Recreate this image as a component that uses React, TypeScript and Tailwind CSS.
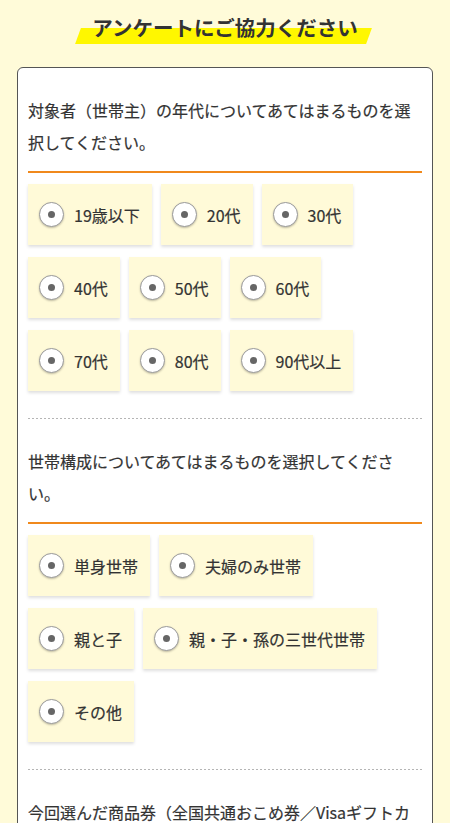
const FONT = '"Noto Sans CJK JP", "Noto Sans", sans-serif';

type Question = {
  text: string;
  options: string[];
};

const QUESTIONS: Question[] = [
  {
    text: '対象者（世帯主）の年代についてあてはまるものを選択してください。',
    options: ['19歳以下', '20代', '30代', '40代', '50代', '60代', '70代', '80代', '90代以上'],
  },
  {
    text: '世帯構成についてあてはまるものを選択してください。',
    options: ['単身世帯', '夫婦のみ世帯', '親と子', '親・子・孫の三世代世帯', 'その他'],
  },
  {
    text: '今回選んだ商品券（全国共通おこめ券／Visaギフトカード）を選んだ理由を教えてください。',
    options: ['お米が好きだから', '使いやすいから'],
  },
];

function RadioOption({ label }: { label: string }) {
  return (
    <label className="flex h-[61px] items-center gap-2.5 bg-[#fffad8] px-[11px] shadow-[0_2px_3px_rgba(0,0,0,0.13)]">
      <span className="flex h-[25px] w-[25px] items-center justify-center rounded-full border border-[#9a9a9a] bg-white shadow-[0_1px_2px_rgba(0,0,0,0.25)]">
        <span className="h-[7px] w-[7px] rounded-full bg-[#666]" />
      </span>
      <span className="pr-px text-base text-[#333] [-webkit-text-stroke:0.2px_#333]">{label}</span>
    </label>
  );
}

function QuestionBlock({ q }: { q: Question }) {
  return (
    <div className="pt-[26px] pb-[27px]">
      <p className="text-base leading-8 text-[#333] [-webkit-text-stroke:0.2px_#333]">{q.text}</p>
      <div className="mt-[13px] h-[2px] bg-[#f0891c]" />
      <div className="mt-[11px] flex flex-wrap gap-x-[9px] gap-y-3">
        {q.options.map((o) => (
          <RadioOption key={o} label={o} />
        ))}
      </div>
    </div>
  );
}

export default function App() {
  return (
    <div className="min-h-screen bg-[#fffbd9] px-[17px] pt-[13px] pb-10" style={{ fontFamily: FONT }}>
      <div className="flex justify-center">
        <div className="relative px-4">
          <span className="absolute left-[2px] right-[4px] top-[15px] h-[16px] -skew-x-[20deg] bg-[#fff700]" />
          <h1 className="relative text-[20.5px] leading-7 font-bold text-[#333]">アンケートにご協力ください</h1>
        </div>
      </div>

      <div className="mt-[26px] rounded-md border border-[#555] bg-white px-[10px]">
        {QUESTIONS.map((q, i) => (
          <div key={i}>
            {i > 0 && (
              <div className="h-px bg-[repeating-linear-gradient(90deg,#b5b5b5_0_2px,transparent_2px_4px)]" />
            )}
            <QuestionBlock q={q} />
          </div>
        ))}
      </div>
    </div>
  );
}
